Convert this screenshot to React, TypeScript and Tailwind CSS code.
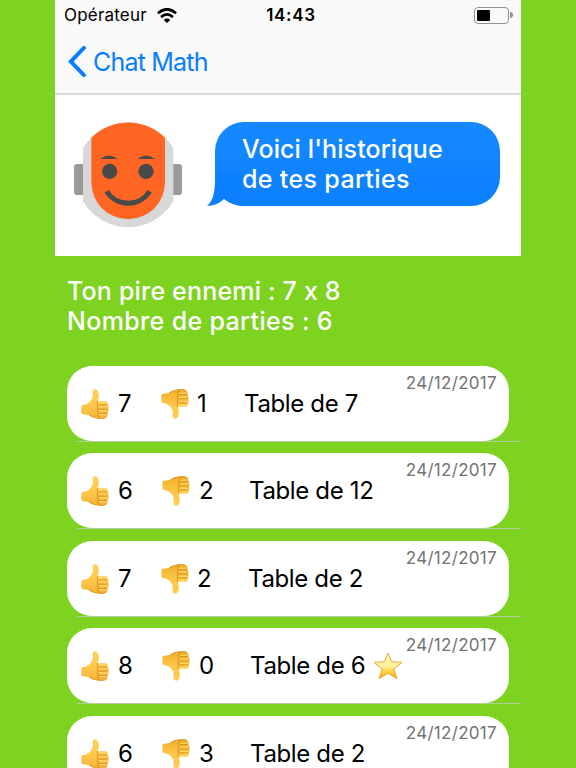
import React from "react";

type Game = {
  good: number;
  bad: number;
  table: number;
  star?: boolean;
  downMargin: string;
  badMargin: string;
  titleMargin: string;
};

const games: Game[] = [
  { good: 7, bad: 1, table: 7, downMargin: "ml-[94px]", badMargin: "ml-[130px]", titleMargin: "ml-[177px]" },
  { good: 6, bad: 2, table: 12, downMargin: "ml-[95px]", badMargin: "ml-[132px]", titleMargin: "ml-[182px]" },
  { good: 7, bad: 2, table: 2, downMargin: "ml-[94px]", badMargin: "ml-[130px]", titleMargin: "ml-[181px]" },
  { good: 8, bad: 0, table: 6, star: true, downMargin: "ml-[95px]", badMargin: "ml-[132px]", titleMargin: "ml-[183px]" },
  { good: 6, bad: 3, table: 2, downMargin: "ml-[95px]", badMargin: "ml-[132px]", titleMargin: "ml-[183px]" },
];

function Thumb({ down = false }: { down?: boolean }) {
  const id = down ? "thumbDown" : "thumbUp";
  return (
    <svg viewBox="0 0 84 91" className="h-[30px] w-7 shrink-0">
      <defs>
        <linearGradient id={id} x1="0" y1={down ? "1" : "0"} x2="0" y2={down ? "0" : "1"}>
          <stop offset="0" stopColor={down ? "#f0ad28" : "#ffd05a"} />
          <stop offset="0.55" stopColor="#ffc84a" />
          <stop offset="1" stopColor={down ? "#ffcb50" : "#f4b035"} />
        </linearGradient>
      </defs>
      <g transform={down ? "translate(0 91) scale(1 -1)" : undefined}>
        <path
          d="M2 49Q17 47 25 40Q37 30 35 12Q34 1 44 1Q51 3 53 14Q55 26 50 37H75Q82 39 80 47Q86 51 82 60Q86 66 80 72Q82 84 74 88Q61 93 44 88Q29 85 23 79Q11 78 2 76Q-1 62 2 49Z"
          fill={`url(#${id})`}
        />
        <path
          d="M50 37Q46 44 51 49Q46 55 51 61Q47 67 52 73Q49 80 55 88M52 49H79M52 61H81M53 74H79"
          fill="none"
          stroke="#d78b19"
          strokeWidth="2.6"
        />
        <path d="M54 41H74M55 53H78M55 66H77M56 78H74" stroke="#ffdb6c" strokeWidth="3" strokeLinecap="round" />
        <path d="M24 79Q34 87 54 89Q67 91 75 87" fill="none" stroke="#dc941e" strokeWidth="2.5" />
      </g>
    </svg>
  );
}

function Star() {
  return (
    <svg viewBox="0 0 90 84" className="ml-2 h-7 w-[30px] shrink-0">
      <defs>
        <linearGradient id="star" x1="0" y1="0" x2="0" y2="1">
          <stop offset="0" stopColor="#fff0b8" />
          <stop offset="0.5" stopColor="#fff3a0" />
          <stop offset="0.7" stopColor="#ffd64c" />
          <stop offset="1" stopColor="#f5a316" />
        </linearGradient>
      </defs>
      <path
        d="M45 3L56 29L87 31L63 51L72 80L45 64L18 80L27 51L3 31L34 29Z"
        fill="url(#star)"
        stroke="#efa938"
        strokeWidth="3"
        strokeLinejoin="round"
      />
    </svg>
  );
}

function Robot() {
  return (
    <svg viewBox="42 36 324 318" className="ml-[19px] mt-[27px] h-[106px] w-[108px] shrink-0">
      <rect x="42" y="162" width="324" height="93" rx="10" fill="#9b9b9b" />
      <path d="M69 115A157 157 0 0 1 340 115V274A157 157 0 0 1 69 274Z" fill="#d8d8d8" />
      <path d="M94 83A157 157 0 0 1 315 83V217A110.5 110.5 0 0 1 94 217Z" fill="#ff6624" />
      <g fill="#4a4a4a">
        <circle cx="149" cy="184" r="23" />
        <circle cx="258" cy="184" r="23" />
        <path d="M120 147Q146 126 173 147ZM232 147Q259 126 286 147Z" />
      </g>
      <path d="M140 244A76 76 0 0 0 269 244" fill="none" stroke="#4a4a4a" strokeWidth="15" />
    </svg>
  );
}

function GameRow({ game }: { game: Game }) {
  return (
    <div className="h-[87.45px] shrink-0">
      <div className="ml-3 grid h-[75px] w-[442px] items-center rounded-[25px] bg-white pt-px text-[24px] leading-[30px] text-black">
        <div className="col-start-1 row-start-1 ml-3.5 flex"><Thumb /></div>
        <span className="col-start-1 row-start-1 ml-[51px]">{game.good}</span>
        <div className={`col-start-1 row-start-1 flex ${game.downMargin}`}><Thumb down /></div>
        <span className={`col-start-1 row-start-1 ${game.badMargin}`}>{game.bad}</span>
        <div className={`col-start-1 row-start-1 flex items-center whitespace-nowrap tracking-[-0.35px] ${game.titleMargin}`}>
          Table de {game.table}
          {game.star && <Star />}
        </div>
        <span className="col-start-1 row-start-1 mr-3 mt-[6px] self-start text-right text-[17px] leading-5 tracking-[0.3px] text-[#737373]">
          24/12/2017
        </span>
      </div>
      <div className="ml-[22px] h-px bg-[#b7cba0]" />
    </div>
  );
}

export default function App() {
  return (
    <div className="h-[768px] overflow-hidden bg-[#7ed321] font-['Inter','Liberation_Sans',sans-serif] [font-feature-settings:'calt'_0]">
      <main className="ml-[55px] flex w-[466px] flex-col">
        <header className="h-[95px] border-b-2 border-[#d9d9d9] bg-[#f9f9f9]">
          <div className="grid h-[30px] grid-cols-3 items-center text-[17px] leading-5 text-black">
            <div className="flex items-center pl-[9px]">
              <span className="tracking-[0.2px]">Opérateur</span>
              <svg viewBox="0 0 60 46" className="ml-2.5 h-[15px] w-5" fill="none" stroke="black" strokeWidth="8.5">
                <path d="M2 16Q30-8 58 16M12 28Q30 11 48 28" />
                <path d="M20 37Q30 28 40 37L30 46Z" fill="black" stroke="none" />
              </svg>
            </div>
            <span className="pl-1.5 text-center font-semibold tracking-[0.7px]">14:43</span>
            <div className="flex items-center justify-end pr-2">
              <div className="h-[17px] w-[35px] rounded-[4px] border border-[#929292] p-[2px]">
                <div className="h-full w-[13px] rounded-[1px] bg-black" />
              </div>
              <div className="ml-px h-1.5 w-[3px] rounded-r-full bg-[#929292]" />
            </div>
          </div>
          <div className="flex h-[63px] items-center pl-[13px] text-[25px] leading-8 text-[#087dff]">
            <svg viewBox="0 0 54 94" className="h-[31px] w-[18px]" fill="none" stroke="currentColor" strokeWidth="12">
              <path d="M48 6L8 47L48 88" strokeLinecap="round" strokeLinejoin="miter" />
            </svg>
            <span className="ml-[7px] tracking-[-0.8px]">Chat Math</span>
          </div>
        </header>
        <section className="flex h-[161.4px] bg-white">
          <Robot />
          <div className="relative ml-[33px] mt-[27px] h-[84px] w-[285px] rounded-[29px] bg-gradient-to-b from-[#1689ff] to-[#0b80ff] pl-[27px] pt-[12px] text-[25px] font-medium leading-[30px] text-white">
            <svg viewBox="0 0 36 32" className="absolute bottom-0 left-[-8px] h-8 w-9 fill-[#0b80ff]">
              <path d="M8 0Q9 25 0 32Q10 32 17 25Q24 31 36 32V0Z" />
            </svg>
            <p className="relative whitespace-nowrap">
              <span className="tracking-[0.1px]">Voici l'historique</span>
              <br />
              <span className="tracking-[0.35px]">de tes parties</span>
            </p>
          </div>
        </section>
        <section className="h-[109.6px] pl-3 pt-[19.6px] text-[25px] font-medium leading-[30px] text-white">
          <p className="tracking-[0.18px]">Ton pire ennemi : 7 x 8</p>
          <p className="tracking-[0.35px]">Nombre de parties : 6</p>
        </section>
        <section className="flex flex-col">
          {games.map((game, index) => (
            <GameRow key={index} game={game} />
          ))}
        </section>
      </main>
    </div>
  );
}
